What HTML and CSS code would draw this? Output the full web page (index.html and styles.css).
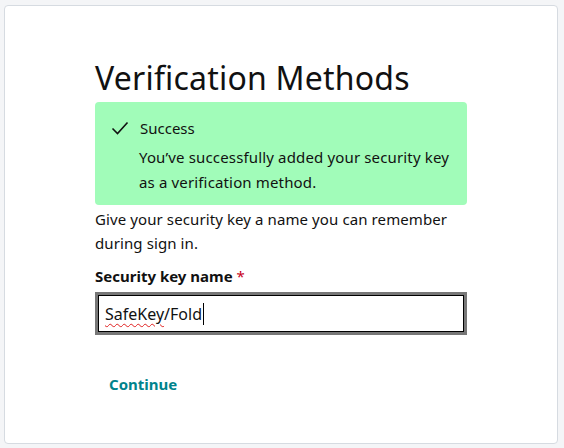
FILE: index.html
```html
<!DOCTYPE html>
<html>
<head>
<meta charset="utf-8">
<link rel="stylesheet" href="styles.css">
</head>
<body>
<div class="card">
  <div class="content">
    <h1 class="title">Verification Methods</h1>
    <div class="alert">
      <div class="alert-head">
        <svg class="check" width="18" height="14" viewBox="0 0 18 14"><path d="M1.5 7.5 L6.5 12.5 L16.5 1.5" fill="none" stroke="#111" stroke-width="1.6"/></svg>
        <span>Success</span>
      </div>
      <p class="alert-body">You’ve successfully added your security key as a verification method.</p>
    </div>
    <p class="desc">Give your security key a name you can remember during sign in.</p>
    <label class="label">Security key name <span class="req">*</span></label>
    <div class="input"><span class="misspelled">SafeKey</span>/Fold<span class="caret"></span></div>
    <div class="actions"><a class="continue">Continue</a></div>
  </div>
</div>
</body>
</html>
```
FILE: styles.css
```css
html, body { margin: 0; padding: 0; }
body {
  background: #f4f5f7;
  font-family: "Noto Sans", "Liberation Sans", sans-serif;
  color: #111;
  width: 564px;
  height: 448px;
  padding: 5px 6px 4px 4px;
  box-sizing: border-box;
}
.card {
  background: #fff;
  border: 1px solid #d6dbe1;
  border-radius: 4px;
  height: 439px;
  box-sizing: border-box;
  padding: 47px 0 0 90px;
}
.content { width: 372px; }
.title {
  margin: 0;
  font-weight: 400;
  font-size: 32px;
  line-height: 49px;
  letter-spacing: 0.2px;
}
.alert {
  background: #a1fcb9;
  border-radius: 4px;
  padding: 14px 16px 0 16px;
  height: 103px;
  box-sizing: border-box;
}
.alert-head {
  display: flex;
  align-items: center;
  gap: 11px;
  font-size: 15px;
  line-height: 24px;
}
.check { display: block; }
.alert-body {
  margin: 5px 0 0 28px;
  font-size: 15px;
  line-height: 25px;
  letter-spacing: 0.15px;
}
.desc {
  margin: 2px 0 0 0;
  font-size: 15px;
  line-height: 24px;
  letter-spacing: 0.1px;
}
.label {
  display: block;
  margin-top: 10px;
  font-size: 15px;
  font-weight: 700;
  line-height: 22px;
}
.req { color: #c8001a; font-weight: 400; }
.input {
  margin-top: 5px;
  height: 43px;
  box-sizing: border-box;
  border: 3px solid #777;
  box-shadow: inset 0 0 0 1px #000;
  display: flex;
  align-items: center;
  padding: 0 0 0 7px;
  font-size: 16px;
  line-height: 24px;
}
.misspelled {
  text-decoration: underline wavy #e02020;
  text-decoration-thickness: 1px;
  text-underline-offset: 3px;
}
.caret {
  display: inline-block;
  width: 1px;
  height: 22px;
  background: #000;
  margin-left: 1px;
}
.actions { margin-top: 37px; padding-left: 14px; }
.continue {
  color: #00838c;
  font-weight: 700;
  font-size: 15px;
  line-height: 24px;
}
```
